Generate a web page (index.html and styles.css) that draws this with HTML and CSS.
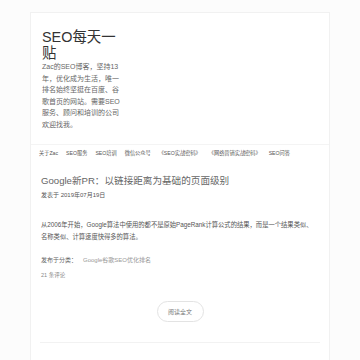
FILE: index.html
```html
<!DOCTYPE html>
<html lang="zh-CN">
<head>
<meta charset="utf-8">
<title>SEO每天一贴</title>
<link rel="stylesheet" href="styles.css">
</head>
<body>
<div class="card">
  <header class="site-header">
    <h1 class="site-title">SEO每天一贴</h1>
    <p class="site-desc">Zac的SEO博客，坚持13年，优化成为生活，唯一排名始终坚挺在百度、谷歌首页的网站。需要SEO服务、顾问和培训的公司欢迎找我。</p>
  </header>
  <nav class="nav">
    <a>关于Zac</a>
    <a>SEO服务</a>
    <a>SEO培训</a>
    <a>微信公众号</a>
    <a>《SEO实战密码》</a>
    <a>《网络营销实战密码》</a>
    <a>SEO问答</a>
  </nav>
  <article class="post">
    <h2 class="post-title">Google新PR：以链接距离为基础的页面级别</h2>
    <div class="post-date">发表于 2019年07月19日</div>
    <p class="post-body">从2006年开始，Google算法中使用的都不是原始PageRank计算公式的结果，而是一个结果类似、名称类似、计算速度快得多的算法。</p>
    <div class="post-cat">发布于分类：<a>Google谷歌SEO优化排名</a></div>
    <div class="post-comments">21 条评论</div>
    <div class="more-wrap"><a class="more">阅读全文</a></div>
  </article>
  <div class="sep"></div>
</div>
</body>
</html>
```

FILE: styles.css
```css
html, body {
  margin: 0;
  padding: 0;
}
body {
  background: #fcfcfc;
  font-family: "Liberation Sans", Arial, "Noto Sans CJK SC", sans-serif;
  color: #555;
}
.card {
  margin: 12px 0 0 30px;
  width: 298px;
  height: 400px;
  background: #fff;
  border: 1px solid #f1f1f1;
}
.site-header {
  padding: 16px 0 0 11px;
  width: 82px;
}
.site-title {
  margin: 0;
  font-size: 14.4px;
  line-height: 16px;
  font-weight: normal;
  color: #333;
}
.site-desc {
  margin: 0;
  font-size: 7px;
  line-height: 11.6px;
  color: #666;
}
.nav {
  margin-top: 13px;
  border-top: 1px solid #f4f4f4;
  padding: 4px 0 0 8px;
  display: flex;
  gap: 8px;
  font-size: 5.2px;
  line-height: 8px;
  color: #555;
}
.post {
  padding: 0 10px 0 10px;
}
.post-title {
  margin: 17px 0 0 0;
  font-size: 9.6px;
  line-height: 14px;
  font-weight: normal;
  color: #666;
}
.post-date {
  margin-top: 2px;
  font-size: 6px;
  line-height: 10px;
  color: #555;
}
.post-body {
  margin: 19px 0 0 0;
  width: 276px;
  font-size: 6.3px;
  line-height: 12px;
  color: #555;
}
.post-cat {
  margin-top: 13.5px;
  font-size: 6px;
  line-height: 8px;
  color: #666;
}
.post-cat a {
  margin-left: 6px;
  color: #999;
}
.post-comments {
  margin-top: 6.5px;
  font-size: 5.5px;
  line-height: 8px;
  color: #888;
}
.more-wrap {
  display: flex;
  justify-content: center;
  margin-top: 22px;
}
.more {
  display: flex;
  align-items: center;
  justify-content: center;
  width: 45px;
  height: 19px;
  border: 1px solid #e3e3e3;
  border-radius: 11px;
  font-size: 6px;
  color: #777;
}
.sep {
  margin: 20px 9px 0 9px;
  height: 1px;
  background: #f2f2f2;
}
```
